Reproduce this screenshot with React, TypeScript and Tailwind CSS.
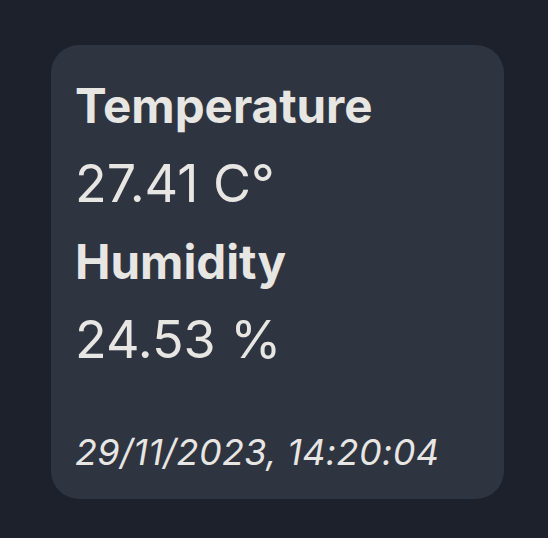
import React from "react";

export default function App() {
  return (
    <div className="min-h-[538px] w-full bg-[#1d212b] pt-[45px] pl-[51px]" style={{ fontFamily: "Inter, 'Noto Sans', sans-serif" }}>
      <div className="w-[453px] h-[454px] rounded-[28px] bg-[#2e3440] px-[24px] pt-[22px] pb-6 text-[#e8e6e3]">
        <div className="text-[47.5px] leading-[78px] font-bold">Temperature</div>
        <div className="text-[52px] leading-[78px] font-normal">27.41 C°</div>
        <div className="text-[47.5px] leading-[78px] font-bold">Humidity</div>
        <div className="text-[52px] leading-[78px] font-normal">24.53 %</div>
        <div className="mt-[49px] text-[36px] leading-[48px] italic tracking-[0.35px]">29/11/2023, 14:20:04</div>
      </div>
    </div>
  );
}
